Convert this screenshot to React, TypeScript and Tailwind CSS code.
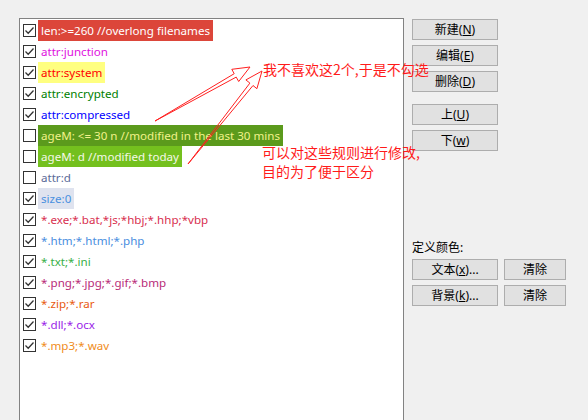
import React from "react";

type Rule = { text: string; checked: boolean; color: string; bg?: string };

const rules: Rule[] = [
  { text: "len:>=260 //overlong filenames", checked: true, color: "text-white", bg: "bg-[#dc463a]" },
  { text: "attr:junction", checked: true, color: "text-[#e010e0]" },
  { text: "attr:system", checked: true, color: "text-[#ff0000]", bg: "bg-[#ffff80]" },
  { text: "attr:encrypted", checked: true, color: "text-[#008000]" },
  { text: "attr:compressed", checked: true, color: "text-[#0000ff]" },
  { text: "ageM: <= 30 n //modified in the last 30 mins", checked: false, color: "text-[#f2f28a]", bg: "bg-[#5b9a1c]" },
  { text: "ageM: d //modified today", checked: false, color: "text-[#f4f8e8]", bg: "bg-[#74c01e]" },
  { text: "attr:d", checked: false, color: "text-[#5a6a98]" },
  { text: "size:0", checked: true, color: "text-[#4a90e0]", bg: "bg-[#dfe3ef]" },
  { text: "*.exe;*.bat,*js;*hbj;*.hhp;*vbp", checked: true, color: "text-[#d83050]" },
  { text: "*.htm;*.html;*.php", checked: true, color: "text-[#4a8ee0]" },
  { text: "*.txt;*.ini", checked: true, color: "text-[#38b048]" },
  { text: "*.png;*.jpg;*.gif;*.bmp", checked: true, color: "text-[#b82c78]" },
  { text: "*.zip;*.rar", checked: true, color: "text-[#e85a10]" },
  { text: "*.dll;*.ocx", checked: true, color: "text-[#9a1ee8]" },
  { text: "*.mp3;*.wav", checked: true, color: "text-[#f08c1c]" },
];

function CheckBox({ checked }: { checked: boolean }) {
  return (
    <div className="flex h-[13px] w-[13px] shrink-0 items-center justify-center border border-[#333] bg-white">
      {checked && (
        <svg width="11" height="11" viewBox="0 0 11 11">
          <path d="M1.5 5.5 L4.2 8.2 L9.5 2.5" fill="none" stroke="#333" strokeWidth="1.3" />
        </svg>
      )}
    </div>
  );
}

function Btn({ children, w = "w-[86px]" }: { children: React.ReactNode; w?: string }) {
  return (
    <button className={`flex h-[21px] ${w} items-center justify-center border border-[#adadad] bg-[#e1e1e1] text-[12px] text-black`}>
      {children}
    </button>
  );
}

function arrow(tx: number, ty: number, px: number, py: number) {
  const dx = px - tx;
  const dy = py - ty;
  const len = Math.hypot(dx, dy);
  const ux = dx / len;
  const uy = dy / len;
  const nx = -uy;
  const ny = ux;
  const bx = px - ux * 17;
  const by = py - uy * 17;
  const pts = [
    [tx, ty],
    [bx + nx * 2, by + ny * 2],
    [bx + nx * 7, by + ny * 7],
    [px, py],
    [bx - nx * 7, by - ny * 7],
    [bx - nx * 2, by - ny * 2],
  ];
  return pts.map((p) => p.map((v) => v.toFixed(1)).join(",")).join(" ");
}

export default function App() {
  return (
    <div
      className="relative h-[420px] w-[588px] overflow-hidden bg-[#f0f0f0]"
      style={{ fontFamily: '"Noto Sans", "Noto Sans CJK SC", sans-serif' }}
    >
      <div className="flex gap-[8px] pl-[19px] pt-[18px]">
        <div className="h-[420px] w-[385px] border border-[#828282] bg-white pl-[3px] pt-[1px]">
          {rules.map((r) => (
            <div key={r.text} className="flex h-[21px] items-center gap-[2px]">
              <CheckBox checked={r.checked} />
              <span className={`flex h-[21px] items-center px-[3px] text-[11.6px] leading-none ${r.color} ${r.bg ?? ""}`}>
                {r.text}
              </span>
            </div>
          ))}
        </div>
        <div className="flex flex-col pt-[1px]">
          <div className="flex flex-col gap-[5px]">
            <Btn>
              新建(<span className="underline">N</span>)
            </Btn>
            <Btn>
              编辑(<span className="underline">E</span>)
            </Btn>
            <Btn>
              删除(<span className="underline">D</span>)
            </Btn>
          </div>
          <div className="mt-[12px] flex flex-col gap-[5px]">
            <Btn>
              上(<span className="underline">U</span>)
            </Btn>
            <Btn>
              下(<span className="underline">w</span>)
            </Btn>
          </div>
          <div className="mt-[89px] text-[12px] leading-[16px] text-black">定义颜色:</div>
          <div className="mt-[3px] flex flex-col gap-[5px]">
            <div className="flex gap-[6px]">
              <Btn>
                文本(<span className="underline">x</span>)...
              </Btn>
              <Btn w="w-[62px]">清除</Btn>
            </div>
            <div className="flex gap-[6px]">
              <Btn>
                背景(<span className="underline">k</span>)...
              </Btn>
              <Btn w="w-[62px]">清除</Btn>
            </div>
          </div>
        </div>
      </div>

      <div className="absolute left-[263px] top-[60px] text-[14px] leading-[19px] whitespace-nowrap text-[#ff1a1a]" style={{ fontFamily: '"Noto Sans CJK SC", sans-serif' }}>
        我不喜欢这2个,于是不勾选
      </div>
      <div className="absolute left-[262px] top-[143px] text-[14px] leading-[19px] whitespace-nowrap text-[#ff1a1a]" style={{ fontFamily: '"Noto Sans CJK SC", sans-serif' }}>
        可以对这些规则进行修改,
        <br />
        目的为了便于区分
      </div>

      <svg className="pointer-events-none absolute left-0 top-0" width="588" height="420">
        <polygon points={arrow(155, 121, 250, 67)} fill="white" fillOpacity="0" stroke="#ff2020" strokeWidth="1" strokeLinejoin="miter" />
        <polygon points={arrow(188, 164, 262, 71)} fill="white" fillOpacity="0" stroke="#ff2020" strokeWidth="1" strokeLinejoin="miter" />
      </svg>
    </div>
  );
}
